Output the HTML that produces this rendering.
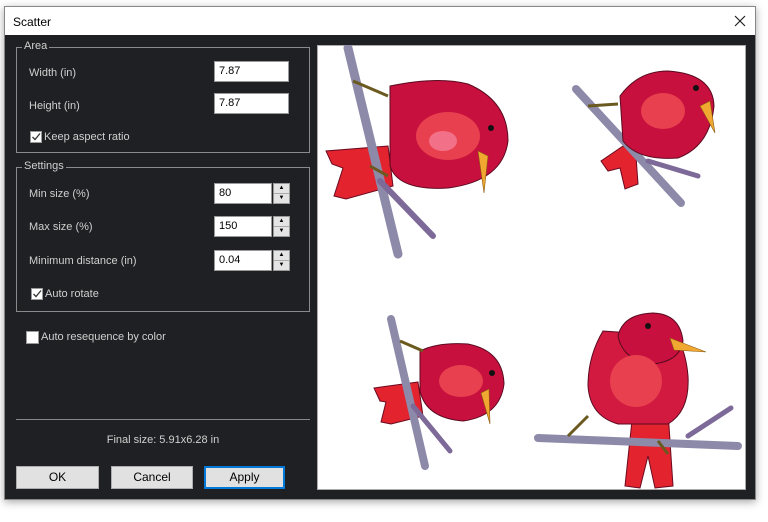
<!DOCTYPE html>
<html><head><meta charset="utf-8">
<style>
*{box-sizing:border-box;margin:0;padding:0}
body{width:768px;height:522px;background:#fff;position:relative;overflow:hidden;font-family:"Liberation Sans",sans-serif;font-size:11px;color:#d0d0d0}
.dlg{position:absolute;left:4px;top:6px;width:752px;height:494px;background:#1f2023;border:1px solid #888;box-shadow:0 2px 8px rgba(0,0,0,.35)}
.abs{position:absolute}
.grp{position:absolute;border:1px solid #8a8a8a}
.leg{position:absolute;background:#1f2023;padding:0 2px;top:-8px;left:5px;color:#d0d0d0;font-size:11px}
.inp{position:absolute;background:#fff;border:1px solid #999;color:#000;font-size:11px;padding:3px 0 0 4px;height:21px}
.spin{position:absolute;width:17px;height:21px;background:#e4e4e4;border:1px solid #999}
.spin div{height:50%;border-bottom:1px solid #aaa;font-size:6px;color:#000;text-align:center;line-height:9px}
.cb{position:absolute;width:12px;height:12px;background:#fff;border:1px solid #999}
.btn{position:absolute;top:466px;height:23px;background:#e1e1e1;border:1px solid #adadad;color:#000;font-size:12px;text-align:center;line-height:21px}
</style></head><body>
<div class="dlg"></div>
<div class="abs" style="left:4px;top:6px;width:752px;height:29px;background:#fff;border:1px solid #888;border-bottom:none;color:#000;font-size:12px;padding:8px 0 0 8px">Scatter
<svg style="position:absolute;right:9px;top:8px" width="12" height="12"><path d="M1 1L11 11M11 1L1 11" stroke="#222" stroke-width="1.2"/></svg></div>

<div class="grp" style="left:16px;top:47px;width:294px;height:106px"><span class="leg">Area</span></div>
<div class="abs" style="left:29px;top:67px">Width (in)</div>
<div class="inp" style="left:214px;top:61px;width:75px">7.87</div>
<div class="abs" style="left:29px;top:100px">Height (in)</div>
<div class="inp" style="left:214px;top:93px;width:75px">7.87</div>
<div class="cb" style="left:30px;top:131px"><svg width="10" height="10" style="position:absolute;left:0;top:0"><path d="M1.5 5L4 7.5L9 1.5" stroke="#333" stroke-width="1.3" fill="none"/></svg></div>
<div class="abs" style="left:44px;top:131px">Keep aspect ratio</div>

<div class="grp" style="left:16px;top:167px;width:294px;height:145px"><span class="leg">Settings</span></div>
<div class="abs" style="left:29px;top:188px">Min size (%)</div>
<div class="inp" style="left:214px;top:183px;width:58px">80</div>
<div class="spin" style="left:273px;top:183px"><div>▲</div><div style="border:none">▼</div></div>
<div class="abs" style="left:29px;top:221px">Max size (%)</div>
<div class="inp" style="left:214px;top:216px;width:58px">150</div>
<div class="spin" style="left:273px;top:216px"><div>▲</div><div style="border:none">▼</div></div>
<div class="abs" style="left:29px;top:255px">Minimum distance (in)</div>
<div class="inp" style="left:214px;top:250px;width:58px">0.04</div>
<div class="spin" style="left:273px;top:250px"><div>▲</div><div style="border:none">▼</div></div>
<div class="cb" style="left:31px;top:288px"><svg width="10" height="10" style="position:absolute;left:0;top:0"><path d="M1.5 5L4 7.5L9 1.5" stroke="#333" stroke-width="1.3" fill="none"/></svg></div>
<div class="abs" style="left:45px;top:288px">Auto rotate</div>

<div class="cb" style="left:26px;top:331px;width:13px;height:13px"></div>
<div class="abs" style="left:41px;top:331px">Auto resequence by color</div>

<div class="abs" style="left:16px;top:419px;width:294px;height:1px;background:#888"></div>
<div class="abs" style="left:16px;top:434px;width:294px;text-align:center">Final size: 5.91x6.28 in</div>

<div class="btn" style="left:16px;width:83px">OK</div>
<div class="btn" style="left:111px;width:82px">Cancel</div>
<div class="btn" style="left:204px;width:81px;border:2px solid #0078d7;line-height:19px">Apply</div>

<svg class="abs" style="left:317px;top:45px" width="429" height="445" viewBox="-1 -1 429 445">
<rect x="-0.5" y="-0.5" width="428" height="444" fill="#fff" stroke="#aaa"/>
<g stroke="#6a0a20" stroke-width="1" fill="#e3242f">
<!-- tails -->
<path d="M70 100 L8 105 L14 118 L25 122 L16 150 L28 153 L75 140 Z"/>
<path d="M305 100 L283 115 L290 125 L302 122 L307 143 L320 138 L318 110 Z"/>
<path d="M100 336 L56 342 L62 355 L68 356 L63 376 L73 378 L105 370 Z"/>
<path d="M315 365 L307 440 L322 442 L330 410 L337 442 L355 440 L350 365 Z"/>
</g>
<g stroke-linecap="round" fill="none">
<line x1="30" y1="2" x2="80" y2="208" stroke="#8c8aa8" stroke-width="9"/>
<line x1="62" y1="135" x2="115" y2="190" stroke="#7d6a98" stroke-width="6"/>
<line x1="258" y1="43" x2="363" y2="157" stroke="#8c8aa8" stroke-width="8"/>
<line x1="330" y1="115" x2="380" y2="130" stroke="#7d6a98" stroke-width="5"/>
<line x1="73" y1="273" x2="107" y2="420" stroke="#8c8aa8" stroke-width="8"/>
<line x1="95" y1="360" x2="132" y2="405" stroke="#7d6a98" stroke-width="5"/>
</g>
<g stroke="#5a0a20" stroke-width="1">
<path d="M72 40 Q120 30 150 38 Q190 55 190 95 Q185 135 130 142 Q80 145 72 120 Z" fill="#c8103e"/>
<ellipse cx="130" cy="90" rx="32" ry="24" fill="#e8404f" stroke="none"/>
<ellipse cx="125" cy="95" rx="14" ry="10" fill="#f27088" stroke="none"/>
<path d="M302 50 Q320 25 350 25 Q395 28 396 60 Q392 100 360 112 Q320 115 305 95 Z" fill="#c8103e"/>
<ellipse cx="345" cy="65" rx="22" ry="18" fill="#e8404f" stroke="none"/>
<path d="M102 305 Q120 296 150 298 Q185 305 186 338 Q182 370 145 375 Q108 372 102 345 Z" fill="#c8103e"/>
<ellipse cx="143" cy="335" rx="22" ry="16" fill="#e8404f" stroke="none"/>
<path d="M285 285 Q270 310 270 340 Q272 370 300 378 L350 378 Q372 365 370 330 Q368 305 358 290 Z" fill="#d21a40"/>
<path d="M300 290 Q305 268 335 267 Q362 268 365 295 Q362 315 335 318 Q305 315 300 290 Z" fill="#c8103e"/>
<ellipse cx="318" cy="335" rx="26" ry="26" fill="#e8404f" stroke="none"/>
</g>
<line x1="220" y1="392" x2="420" y2="400" stroke="#8c8aa8" stroke-width="8" stroke-linecap="round"/>
<line x1="370" y1="390" x2="413" y2="362" stroke="#7d6a98" stroke-width="5" stroke-linecap="round"/>
<g fill="#f0a830" stroke="#8a5a10" stroke-width="0.6">
<path d="M160 105 L170 110 L166 147 Z"/>
<path d="M382 60 L392 55 L397 87 Z"/>
<path d="M163 347 L171 343 L172 378 Z"/>
<path d="M352 292 L388 306 L356 304 Z"/>
</g>
<g fill="#111"><circle cx="173" cy="82" r="3"/><circle cx="378" cy="42" r="3"/><circle cx="174" cy="327" r="3"/><circle cx="330" cy="280" r="3"/></g>
<g stroke="#6b5a20" stroke-width="3" fill="none"><path d="M35 35 L70 50"/><path d="M52 120 L70 130"/><path d="M270 60 L300 58"/><path d="M82 295 L105 305"/><path d="M250 390 L270 370"/><path d="M340 395 L350 408"/></g>
</svg>
</body></html>
